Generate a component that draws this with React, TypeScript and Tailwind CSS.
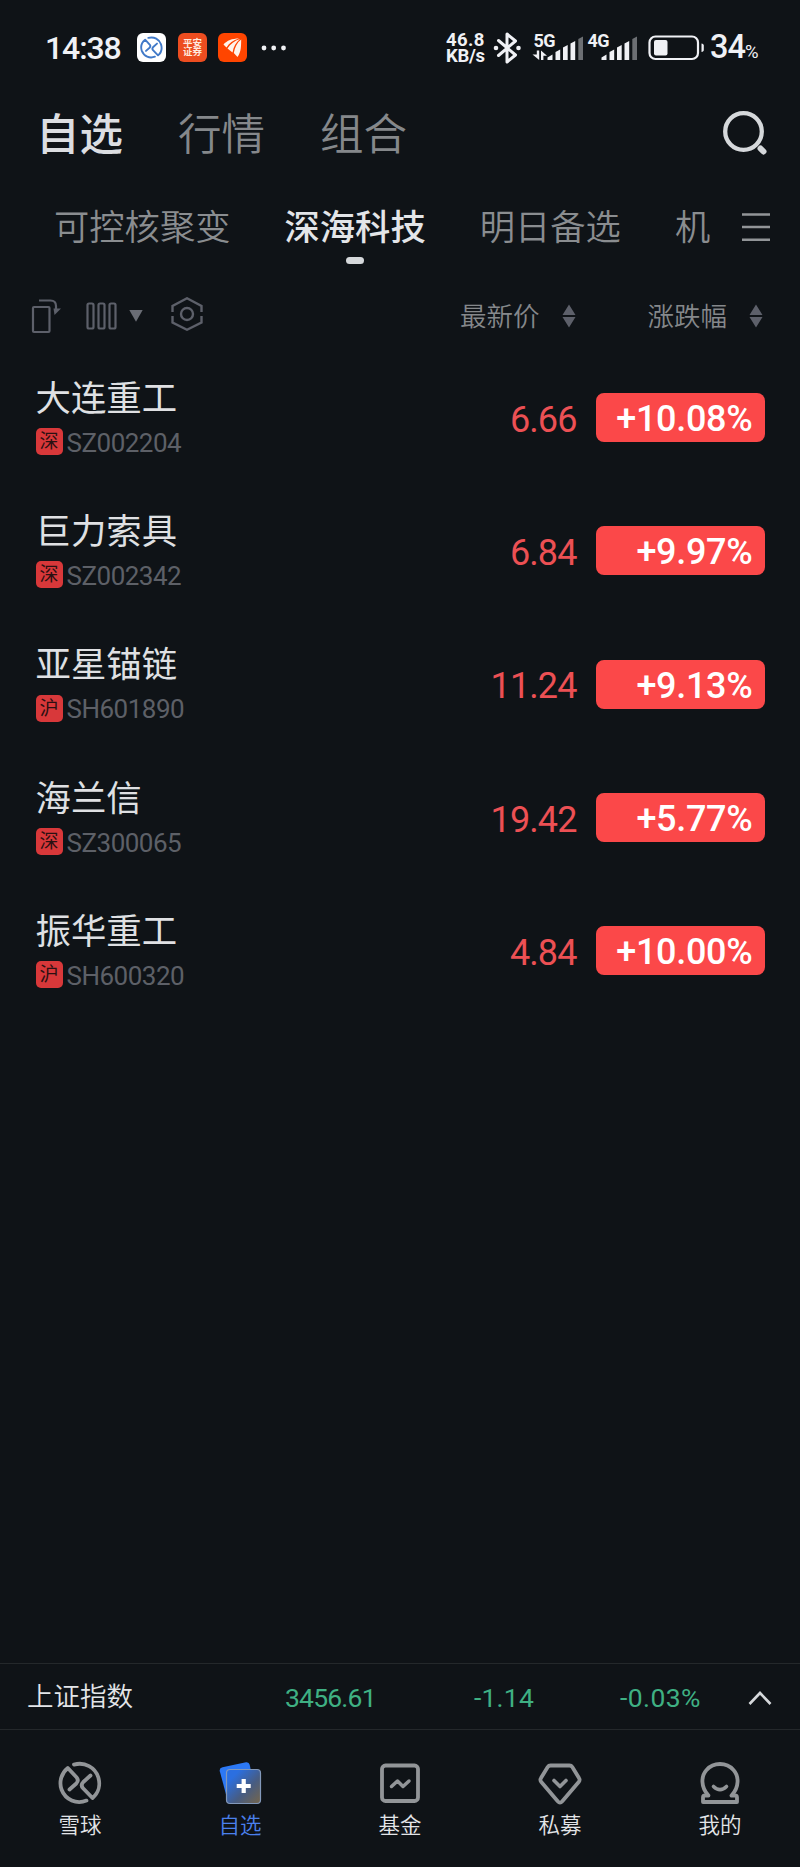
import React, { useState } from "react";

interface Stock {
    name: string;
    market: string;
    code: string;
    price: string;
    change: string;
}

const stocks: Stock[] = [
    { name: "大连重工", market: "深", code: "SZ002204", price: "6.66", change: "+10.08%" },
    { name: "巨力索具", market: "深", code: "SZ002342", price: "6.84", change: "+9.97%" },
    { name: "亚星锚链", market: "沪", code: "SH601890", price: "11.24", change: "+9.13%" },
    { name: "海兰信", market: "深", code: "SZ300065", price: "19.42", change: "+5.77%" },
    { name: "振华重工", market: "沪", code: "SH600320", price: "4.84", change: "+10.00%" },
];

const XueqiuMark = ({ className, width }: { className: string; width: number }) => (
    <svg viewBox="0 0 44 44" className={className} fill="none" stroke="currentColor" strokeWidth={width} strokeLinecap="round" strokeLinejoin="round">
        <path d="M16 3.600C27 .5 37 6.500 40.200 16c2.500 8 .3 16-5.700 21L25.300 27.500c-2.300-2.400-2.300-4.200 0-6.500L32.500 14.500" />
        <path d="M28.500 39.600C18.500 43.500 7.500 39 3.500 28.500 .8 20.500 3.500 12 9.800 7l8.700 9.300c2 2.400 1.700 4.200-.2 6.200L11.500 28.500" />
    </svg>
);

const SignalBars = ({ label, arrows }: { label: string; arrows?: boolean }) => (
    <svg viewBox="0 -6 52 42" className="h-[42px] w-[52px]" fill="#f0f1f5">
        <text x="1.500" y="13.800" className="font-['Roboto',sans-serif] text-[18px] font-bold tracking-[-0.600px]">{label}</text>
        {arrows && <path d="M4.800 17.500h2.400V27L.5 21.500h4.300zM9 27v-9.500l6 5.300h-3.600V27z" />}
        <path d="M15.500 27v-2.500l5-3V27zM23.500 27v-8l4.700-2.500V27zM31 27V14.500l4.700-2.500V27zM38.500 27V10.500L43.200 8v19z" />
        <path d="M46.300 27V6l4.700-2.500V27z" fill="#6c6f73" />
    </svg>
);

const StatusBar = () => (
    <div className="flex h-[95px] items-center pl-[45px] text-[#f0f1f5]">
        <span className="w-[92px] text-[32px] leading-none font-medium tracking-[-1.100px]">14:38</span>
        <span className="flex h-[29px] w-[29px] items-center justify-center rounded-[6px] bg-white">
            <XueqiuMark className="h-[23px] w-[23px] text-[#4079c8]" width={3.6} />
        </span>
        <span className="ml-[12px] flex h-[29px] w-[29px] flex-col items-center justify-center rounded-[6px] bg-[#ed4d20] text-[9.500px] leading-[8.800px] font-bold text-[#ffe9df]">
            <span>平安</span>
            <span>证券</span>
        </span>
        <span className="ml-[11px] flex h-[29px] w-[29px] items-center justify-center rounded-[6px] bg-[#ff4500]">
            <svg viewBox="0 0 29 29" className="h-[29px] w-[29px]" fill="#fff4ea">
                <path d="M5.500 11.500C9 7.500 14 5.500 21 5.500 15 7 11 10 8.500 14.500z" />
                <path d="M9.500 15.500c3-4.500 7-8 12.500-9.500C18 9.500 15.500 13.500 14.500 19.500z" />
                <path d="M15.800 20C17 14 19 9.500 23.200 6.500c-.2 6 .3 12-3.700 17.500z" />
            </svg>
        </span>
        <svg viewBox="0 0 26 6" className="ml-[14px] h-[6px] w-[26px]" fill="#f0f1f5">
            <circle cx="3" cy="3" r="2.400" />
            <circle cx="12.700" cy="3" r="2.400" />
            <circle cx="22.500" cy="3" r="2.400" />
        </svg>
        <span className="ml-[159px] flex w-[40px] flex-col items-start text-[18.500px] leading-[16px] font-bold">
            <span className="tracking-[0.400px]">46.8</span>
            <span className="tracking-[-0.300px]">KB/s</span>
        </span>
        <svg viewBox="0 0 30 34" className="ml-[6px] h-[34px] w-[30px]" fill="none" stroke="#f0f1f5" strokeWidth="3" strokeLinejoin="round" strokeLinecap="round">
            <path d="m6.500 9.500 17 14.500-8.500 7V3l8.500 7-17 14.500" />
            <circle cx="4" cy="17" r="2.300" fill="#f0f1f5" stroke="none" />
            <circle cx="26.500" cy="17" r="2.300" fill="#f0f1f5" stroke="none" />
        </svg>
        <span className="ml-[10px] flex">
            <SignalBars label="5G" arrows />
            <span className="ml-[2px]"><SignalBars label="4G" /></span>
        </span>
        <svg viewBox="0 0 58 26" className="ml-[10px] h-[26px] w-[58px]">
            <rect x="1.500" y="1.500" width="48.500" height="22.500" rx="6" fill="none" stroke="#f0f1f5" strokeWidth="2.200" />
            <rect x="6" y="5" width="13.500" height="15.500" rx="2" fill="#f0f1f5" />
            <path d="M53.500 8.500c1.500.3 2.300 1 2.300 2v4.500c0 1-.8 1.700-2.300 2z" fill="#f0f1f5" />
        </svg>
        <span className="ml-[4px] flex items-baseline leading-none font-medium">
            <span className="text-[32.500px] tracking-[-1px]">34</span>
            <span className="text-[18.500px] font-normal">%</span>
        </span>
    </div>
);

const SortArrows = () => (
    <svg viewBox="0 0 14 24" className="h-[24px] w-[14px]" fill="#5d606a">
        <path d="M7 .5 13.500 11H.5zM7 23.500 13.500 13H.5z" />
    </svg>
);

const StockRow = ({ stock }: { stock: Stock }) => (
    <div className="flex h-[133.300px] items-center px-[35.500px]">
        <div className="flex-1">
            <p className="text-[35.400px] leading-[44px] text-[#dfe0e3]">{stock.name}</p>
            <div className="mt-[6px] flex items-center pb-[2px]">
                <span className="flex h-[27px] w-[27px] items-center justify-center rounded-[5px] bg-[#d8383a] text-[19px] leading-none text-[#2b1012]">{stock.market}</span>
                <span className="ml-[4px] pt-[2px] text-[26px] leading-[28px] tracking-[-0.500px] text-[#5d6067]">{stock.code}</span>
            </div>
        </div>
        <span className="pt-[4px] text-[36px] leading-none tracking-[-0.900px] text-[#ec5054]">{stock.price}</span>
        <span className="ml-[19px] flex h-[49px] w-[169px] items-center justify-end rounded-[8px] bg-[#fb4849] pt-[3px] pr-[12px] text-[36px] leading-none font-medium tracking-[-0.300px] text-white">{stock.change}</span>
    </div>
);

const tabs = ["可控核聚变", "深海科技", "明日备选", "机"];

const navItems = [
    {
        label: "雪球",
        icon: <XueqiuMark className="h-[44px] w-[44px]" width={3.8} />,
    },
    {
        label: "自选",
        icon: (
            <svg viewBox="0 0 44 44" className="h-[44px] w-[44px]">
                <defs>
                    <linearGradient id="card" x1="0" y1="0" x2="1" y2="1">
                        <stop offset=".2" stopColor="#2b6fe0" />
                        <stop offset=".6" stopColor="#475c82" />
                        <stop offset="1" stopColor="#76664a" />
                    </linearGradient>
                </defs>
                <path d="M4.500 6.200 28 1.200q3-.5 3.700 2.500L38 34 9.500 39 1.800 10.200q-.7-3.200 2.700-4z" fill="#2c78f4" />
                <rect x="8.500" y="8.500" width="34" height="34" rx="3.500" fill="url(#card)" stroke="#8399bb" strokeWidth="1.200" />
                <path d="M25.700 18v14M18.700 25h14" stroke="#fff" strokeWidth="4.200" />
            </svg>
        ),
    },
    {
        label: "基金",
        icon: (
            <svg viewBox="0 0 44 44" className="h-[44px] w-[44px]" fill="none" stroke="currentColor" strokeWidth="3.800" strokeLinejoin="round" strokeLinecap="round">
                <rect x="4" y="4.500" width="36" height="35.500" rx="3.500" />
                <path d="m13.500 25.500 6-5.500 5.500 5.500 6-5.500" strokeWidth="3.500" />
            </svg>
        ),
    },
    {
        label: "私募",
        icon: (
            <svg viewBox="0 0 44 44" className="h-[44px] w-[44px]" fill="none" stroke="currentColor" strokeWidth="3.800" strokeLinejoin="round" strokeLinecap="round">
                <path d="M12.500 4.500h19q1.800 0 2.800 1.500l6.700 11q1.300 2-.3 4L24.300 40.300q-2.300 2.500-4.600 0L3.300 21q-1.600-2-.3-4L9.700 6q1-1.500 2.800-1.500z" />
                <path d="m16 19.500 6 6 6-6" strokeWidth="3.600" />
            </svg>
        ),
    },
    {
        label: "我的",
        icon: (
            <svg viewBox="0 0 44 44" className="h-[44px] w-[44px]" fill="none" stroke="currentColor" strokeWidth="3.800" strokeLinejoin="round" strokeLinecap="round">
                <path d="M5 41v-4.500q0-2 2-2h3.500C2.500 26 3 15 8.500 9c7-8 20-8 27 0 5.500 6 6 17-2 25.500H37q2 0 2 2V41z" />
                <path d="M15.500 25.500q6.500 6.500 13 0" strokeWidth="3.600" />
            </svg>
        ),
    },
];

const App: React.FC = () => {
    const [activeTab, setActiveTab] = useState<number>(1);
    const [activeNav, setActiveNav] = useState<number>(1);

    return (
        <div className="flex h-[1867px] w-[800px] flex-col overflow-hidden bg-[#0f1317] font-['Roboto','Noto_Sans_CJK_SC',sans-serif]">
            <StatusBar />

            <header className="flex h-[76px] items-center pl-[36px] text-[43.500px] leading-none text-[#85888b]">
                <span className="w-[142px] pt-[5px] font-medium text-[#dcdee2]">自选</span>
                <span className="w-[142px] pt-[5px] font-[350]">行情</span>
                <span className="pt-[5px] font-[350]">组合</span>
                <svg viewBox="0 0 46 46" className="mr-[32px] ml-auto h-[46px] w-[46px]" fill="none" stroke="#d5d8db" strokeLinecap="round">
                    <circle cx="21.500" cy="21.500" r="18.300" strokeWidth="4.300" />
                    <path d="m38.500 38.500 3 3" strokeWidth="6" />
                </svg>
            </header>

            <div className="flex h-[111px] items-center pl-[54px] text-[35.300px] leading-none text-[#8a8d90]">
                {tabs.map((tab, i) => (
                    <button
                        key={tab}
                        type="button"
                        onClick={() => setActiveTab(i)}
                        className={`relative mr-[54px] shrink-0 pt-[4px] last-of-type:mr-0 ${i === activeTab ? "font-medium text-[#e3e5e8]" : "font-[350]"}`}
                    >
                        {tab}
                        {i === activeTab && <span className="absolute top-[50px] left-1/2 h-[7px] w-[18px] -translate-x-1/2 rounded-full bg-[#d5d8db]"></span>}
                    </button>
                ))}
                <svg viewBox="0 0 28 30" className="mr-[30px] ml-auto h-[30px] w-[28px]" stroke="#929598" strokeWidth="2.600">
                    <path d="M0 2.500h28M0 15h28M0 27.700h28" />
                </svg>
            </div>

            <div className="flex h-[67px] items-center pl-[31px] text-[26.500px] leading-none font-[350] text-[#85888b]">
                <svg viewBox="0 0 30 36" className="h-[36px] w-[30px]" fill="none" stroke="#5d606a" strokeWidth="2.200">
                    <rect x="2" y="9" width="16.500" height="25" rx="1" />
                    <path d="M8 2.500h11.500q5.500 0 5.500 5.500v3" />
                    <path d="M22.500 10.500h7.500L23.500 17z" fill="#5d606a" stroke="none" />
                </svg>
                <svg viewBox="0 0 32 28" className="ml-[25px] h-[28px] w-[32px]" fill="none" stroke="#5d606a" strokeWidth="2.200">
                    <rect x="1.500" y="1.500" width="6" height="25" rx="1.500" />
                    <rect x="12.500" y="1.500" width="6" height="25" rx="1.500" />
                    <rect x="23.500" y="1.500" width="6" height="25" rx="1.500" />
                </svg>
                <svg viewBox="0 0 14 12" className="ml-[11px] h-[12px] w-[14px]" fill="#6a6d75">
                    <path d="M.3 0h13.400L7 11.700z" />
                </svg>
                <svg viewBox="0 0 32 34" className="mb-[3px] ml-[28px] h-[34px] w-[32px]" fill="none" stroke="#5d606a" strokeWidth="2.400">
                    <path d="M1.500 15V9L16 1.300 30.500 9v6M1.500 19v6.500L16 32.700l14.500-7.200V19" />
                    <circle cx="16" cy="17" r="6" />
                </svg>
                <span className="ml-[257px] pt-[4px]">最新价</span>
                <span className="ml-[22px]"><SortArrows /></span>
                <span className="ml-[72px] pt-[4px]">涨跌幅</span>
                <span className="ml-[22px]"><SortArrows /></span>
            </div>

            <main className="flex-1 pt-[2px]">
                {stocks.map((stock) => (
                    <StockRow key={stock.code} stock={stock} />
                ))}
            </main>

            <div className="flex h-[67px] items-center border-y border-[#24282b] pt-[2px] pl-[27px] text-[26.500px] leading-none text-[#3fb083]">
                <span className="w-[258px] font-[350] text-[#e3e5e8]">上证指数</span>
                <span className="w-[189px] pt-px tracking-[-0.800px]">3456.61</span>
                <span className="w-[146px] pt-px tracking-[0.200px]">-1.14</span>
                <span className="pt-px tracking-[0.400px]">-0.03%</span>
                <svg viewBox="0 0 24 16" className="mr-[28px] ml-auto h-[16px] w-[24px]" fill="none" stroke="#d5d8db" strokeWidth="2.600">
                    <path d="M1.500 14 12 3l10.500 11" />
                </svg>
            </div>

            <nav className="grid h-[137px] grid-cols-5 pt-[31px]">
                {navItems.map((item, i) => (
                    <button key={item.label} type="button" onClick={() => setActiveNav(i)} className="flex flex-col items-center text-[#929598]">
                        {item.icon}
                        <span className={`mt-[9px] text-[21.500px] leading-[24px] font-[350] ${i === activeNav ? "text-[#4b80ec]" : "text-[#e3e5e8]"}`}>{item.label}</span>
                    </button>
                ))}
            </nav>
        </div>
    );
};

export default App;
